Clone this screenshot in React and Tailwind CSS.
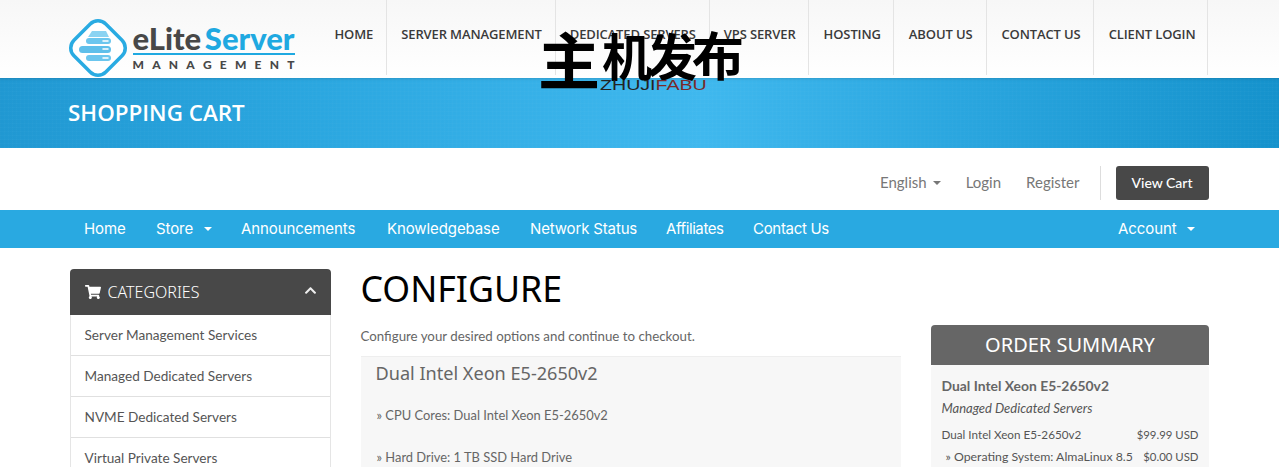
import { FaShoppingCart, FaChevronUp } from 'react-icons/fa';

const siteNav = [
  ['HOME', 'pr-[13px]'],
  ['SERVER MANAGEMENT', 'pl-[14px] pr-[13px]'],
  ['DEDICATED SERVERS', 'pl-[14px] pr-[13px]'],
  ['VPS SERVER', 'pl-[14px] pr-[12px]'],
  ['HOSTING', 'pl-[15px] pr-[12px]'],
  ['ABOUT US', 'pl-[15px] pr-[14px]'],
  ['CONTACT US', 'pl-[14px] pr-[12px]'],
  ['CLIENT LOGIN', 'pl-[15px] pr-[11px]'],
];
const storeNav = [
  { label: 'Home', cls: 'w-[42px]' },
  { label: 'Store', cls: 'w-[55px]', caret: true },
  { label: 'Announcements', cls: 'w-[116px]', },
  { label: 'Knowledgebase', cls: 'w-[113px]' },
  { label: 'Network Status', cls: 'w-[106px] tracking-[-0.15px]' },
  { label: 'Affiliates', cls: 'w-[57px] tracking-[-0.4px]' },
  { label: 'Contact Us', cls: 'w-[76px] tracking-[-0.3px]' },
];
const categories = ['Server Management Services', 'Managed Dedicated Servers', 'NVME Dedicated Servers', 'Virtual Private Servers'];

const Caret = ({ className }) => (
  <span className={`inline-block w-0 h-0 border-x-[4px] border-x-transparent border-t-[4px] ${className}`} />
);

function Logo() {
  return (
    <div className="flex items-center">
      <svg width="60" height="60" viewBox="0 0 60 60" className="shrink-0">
        <rect x="7.5" y="7.5" width="45" height="45" rx="11" transform="rotate(45 30 30)" fill="#fff" stroke="#29abe2" strokeWidth="3.5" />
        <path d="M20 19 L24 13 H38 L41 19 Z" fill="#8bd3f2" />
        <rect x="18" y="20" width="25" height="6" rx="3" fill="#6cc6ee" />
        <rect x="11" y="28" width="32" height="7" rx="3.5" fill="#5fbfea" />
        <rect x="18" y="37" width="25" height="6" rx="3" fill="#6cc6ee" />
        <path d="M35 23h5M35 31h5M35 40h5" stroke="#fff" strokeWidth="1.5" strokeLinecap="round" />
      </svg>
      <div className="ml-[5px] w-[162px] font-['Lato',sans-serif]">
        <div className="flex h-[25px] items-end justify-between text-[31px] font-black leading-[25px]">
          <span className="text-[#484848]">eLite</span>
          <span className="text-[#1fa9e1]">Server</span>
        </div>
        <div className="mt-[2px] h-[2px] bg-[#1fa9e1]" />
        <div className="mt-[4px] flex justify-between text-[12px] font-black leading-[11px] text-[#484848]">
          {'MANAGEMENT'.split('').map((c, i) => <span key={i}>{c}</span>)}
        </div>
      </div>
    </div>
  );
}

function Watermark() {
  return (
    <div className="absolute left-[538px] top-[22px] h-[72px] w-[204px] text-black">
      <div className="flex font-['Noto_Sans_CJK_SC',sans-serif] font-bold leading-none">
        <span className="w-[64px] text-[62px] leading-[72px]">主</span>
        <span className="w-[45px] text-[50px] leading-[64px]">机</span>
        <span className="w-[45px] text-[50px] leading-[64px]">发</span>
        <span className="w-[50px] text-[52px] leading-[64px]">布</span>
      </div>
      <div className="absolute left-[62px] top-[57px] origin-left scale-x-[1.4] whitespace-nowrap font-['Liberation_Sans',sans-serif] text-[14px] leading-[13px] text-[#222]">
        ZHUJI<span className="text-[#7a2a2a]">FABU</span>
      </div>
    </div>
  );
}

export default function App() {
  return (
    <div className="relative h-[467px] overflow-hidden bg-white font-['Lato',sans-serif] text-[#666]">
      <header className="h-[78px] bg-gradient-to-b from-[#f7f7f7] to-white">
        <div className="mx-auto flex w-[1140px] justify-between pr-[2px]">
          <div className="-ml-[2px] pt-[18px]"><Logo /></div>
          <nav className="flex h-[75px] font-['Open_Sans',sans-serif] text-[13px] font-semibold tracking-[-0.12px] text-[#3a3a3a]">
            {siteNav.map(([item, pad]) => (
              <a key={item} className={`whitespace-nowrap border-r border-[#e4e4e4] pt-[25px] leading-[18px] ${pad}`}>{item}</a>
            ))}
          </nav>
        </div>
      </header>

      <section className="h-[70px] bg-[repeating-linear-gradient(0deg,rgba(255,255,255,0.015)_0px,rgba(255,255,255,0.015)_1px,transparent_1px,transparent_4px),repeating-linear-gradient(90deg,rgba(255,255,255,0.015)_0px,rgba(255,255,255,0.015)_1px,transparent_1px,transparent_4px),linear-gradient(90deg,#2098d2_0%,#2ba7e0_25%,#3fb8ee_55%,#2aa6df_75%,#1592cc_100%)] shadow-[inset_0_3px_3px_-2px_rgba(0,0,0,0.12)]">
        <div className="mx-auto w-[1140px] pt-[19px] font-['Open_Sans',sans-serif] text-[22.4px] font-semibold leading-[32px] text-white"><span className="-ml-[1.5px]">SHOPPING CART</span></div>
      </section>

      <div className="mx-auto flex h-[62px] w-[1140px] items-center justify-end pr-[1px] pt-[7px] text-[15px] text-[#777]">
        <span className="flex items-center gap-[6px]">English <Caret className="border-t-[#777]" /></span>
        <span className="ml-[25px]">Login</span>
        <span className="ml-[25px]">Register</span>
        <span className="ml-[20px] h-[34px] border-l border-[#ddd]" />
        <a className="ml-[15px] flex h-[34px] w-[93px] items-center justify-center rounded-[3px] bg-[#484848] text-[14px] font-medium text-white">View Cart</a>
      </div>

      <nav className="h-[38px] bg-[#29a9e1] font-['Inter',sans-serif] text-[15px] leading-[38px] tracking-[-0.1px] text-white">
        <div className="mx-auto flex w-[1140px] justify-between pl-[14.5px] pr-[15px]">
          <div className="flex gap-[30px]">
            {storeNav.map(({ label, cls, caret }) => (
              <a key={label} className={`flex items-center whitespace-nowrap ${cls}`}>
                {label}
                {caret && <Caret className="ml-[11px] border-t-white" />}
              </a>
            ))}
          </div>
          <a className="flex items-center">Account<Caret className="ml-[10px] border-t-white" /></a>
        </div>
      </nav>

      <main className="mx-auto mt-[21px] flex w-[1140px]">
        <aside className="w-[261px] shrink-0">
          <div className="flex h-[46px] items-center rounded-t-[4px] bg-[#484848] pl-[15px] pr-[14px] text-white">
            <FaShoppingCart className="text-[16px]" />
            <span className="ml-[7px] font-['Noto_Sans',sans-serif] text-[16px] font-light">CATEGORIES</span>
            <FaChevronUp className="mb-[4px] ml-auto text-[13px] text-[#eee]" />
          </div>
          <div className="border-x border-[#e5e5e5]">
            {categories.map((c) => (
              <div key={c} className="h-[41px] border-b border-[#e0e0e0] pl-[14px] pt-[9px] text-[13.6px] leading-[22px] text-[#555]">{c}</div>
            ))}
          </div>
        </aside>

        <div className="ml-[30px] flex-1">
          <h1 className="-mt-[1px] font-['Noto_Sans',sans-serif] text-[35.7px] font-normal leading-[40px] text-black">CONFIGURE</h1>
          <div className="flex">
            <div className="w-[540px] shrink-0">
              <p className="mt-[18px] text-[13.3px] leading-[20px] text-[#666]">Configure your desired options and continue to checkout.</p>
              <div className="mt-[10px] h-[200px] border-t border-[#eee] bg-[#f7f7f7] px-[15px]">
                <h3 className="pt-[3px] font-['Noto_Sans',sans-serif] text-[18.1px] font-normal leading-[27px] text-[#666]">Dual Intel Xeon E5-2650v2</h3>
                <p className="ml-[1px] mt-[18px] text-[12.9px] leading-[20px]">» CPU Cores: Dual Intel Xeon E5-2650v2</p>
                <p className="ml-[1px] mt-[22px] text-[12.9px] leading-[20px]">» Hard Drive: 1 TB SSD Hard Drive</p>
              </div>
            </div>
            <div className="ml-[30px] mt-[17px] w-[278px] shrink-0">
              <div className="h-[40px] rounded-t-[4px] bg-[#666] pl-[1px] text-center font-['Noto_Sans',sans-serif] text-[20px] leading-[40px] text-white">ORDER SUMMARY</div>
              <div className="h-[200px] rounded-t-[4px] bg-[#f7f7f7] pl-[11px] pr-[10px] pt-[10px] text-[#555]">
                <div className="text-[13.9px] font-bold leading-[22px] text-[#666]">Dual Intel Xeon E5-2650v2</div>
                <div className="mt-[1px] text-[13px] italic leading-[20px]">Managed Dedicated Servers</div>
                <div className="mt-[6px] flex items-baseline justify-between whitespace-nowrap leading-[20px]"><span className="text-[11.7px]">Dual Intel Xeon E5-2650v2</span><span className="text-[11.4px]">$99.99 USD</span></div>
                <div className="mt-[2px] flex items-baseline justify-between whitespace-nowrap leading-[20px]"><span className="pl-[4px] text-[12.3px]">» Operating System: AlmaLinux 8.5</span><span className="text-[11.4px]">$0.00 USD</span></div>
              </div>
            </div>
          </div>
        </div>
      </main>

      <Watermark />
    </div>
  );
}
